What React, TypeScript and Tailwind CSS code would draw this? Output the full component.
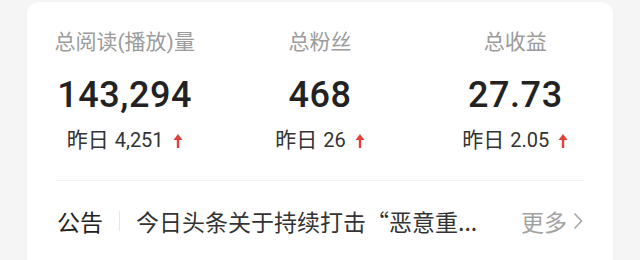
import React from 'react';

const stats = [
	{ label: '总阅读(播放)量', value: '143,294', yesterday: '4,251' },
	{ label: '总粉丝', value: '468', yesterday: '26' },
	{ label: '总收益', value: '27.73', yesterday: '2.05' },
];

function UpArrow() {
	return (
		<svg width="10" height="14" viewBox="0 0 10 14" className="ml-[9px] mt-[1px]">
			<path d="M5 0 L9.5 6 L6.2 6 L6.2 14 L3.8 14 L3.8 6 L0.5 6 Z" fill="#e4403a" />
		</svg>
	);
}

function StatColumn({ label, value, yesterday }: { label: string; value: string; yesterday: string }) {
	return (
		<div className="flex flex-col items-center">
			<div className="text-[21px] leading-[26px] text-[#9b9b9b]">{label}</div>
			<div className="mt-[18px] text-[36px] leading-[44px] font-medium text-[#222222] tracking-[0.6px]">{value}</div>
			<div className="mt-[11px] flex items-center text-[20px] leading-[24px] text-[#333333]">
				<span className="text-[21px]">昨日</span>
				<span className="ml-[6px]">{yesterday}</span>
				<UpArrow />
			</div>
		</div>
	);
}

export default function App() {
	return (
		<div className="w-[640px] h-[260px] overflow-hidden bg-[#f5f5f5] px-[27px] pt-[2px] font-['Roboto','Noto_Sans_CJK_SC',sans-serif]">
			<div className="h-[300px] bg-white rounded-t-[12px]">
				<div className="grid grid-cols-3 pt-[27px]">
					{stats.map((s) => (
						<StatColumn key={s.label} label={s.label} value={s.value} yesterday={s.yesterday} />
					))}
				</div>
				<div className="mx-[29px] mt-[28px] h-px bg-[#f0f0f0]" />
				<div className="flex items-center px-[30px] h-[80px]">
					<span className="text-[23px] text-[#222222] font-['Noto_Sans_CJK_SC',sans-serif]">公告</span>
					<span className="mx-[16px] w-px h-[20px] bg-[#e6e6e6]" />
					<span className="text-[23px] text-[#333333] font-['Noto_Sans_CJK_SC',sans-serif]">今日头条关于持续打击“恶意重...</span>
					<span className="ml-auto flex items-center text-[23px] text-[#a3a3a3] font-['Noto_Sans_CJK_SC',sans-serif]">
						更多
						<svg width="10" height="18" viewBox="0 0 10 18" className="ml-[6px]">
							<path d="M1.5 1.5 L8.5 9 L1.5 16.5" fill="none" stroke="#a3a3a3" strokeWidth="1.5" />
						</svg>
					</span>
				</div>
			</div>
		</div>
	);
}
